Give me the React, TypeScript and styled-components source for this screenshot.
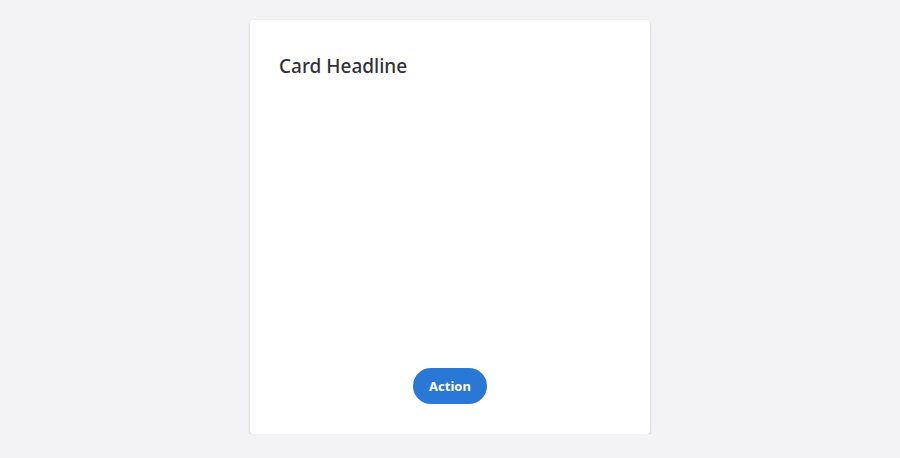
import React from "react";
import styled, { createGlobalStyle } from "styled-components";

const Global = createGlobalStyle`
  html, body { margin: 0; padding: 0; background: #f3f3f5; }
  body { font-family: "Noto Sans", "Open Sans", sans-serif; }
`;

const Page = styled.div`
  display: flex;
  justify-content: center;
  padding-top: 20px;
`;

const Card = styled.div`
  width: 400px;
  height: 414px;
  box-sizing: border-box;
  background: #ffffff;
  border-radius: 3px;
  box-shadow: 0 1px 3px rgba(0, 0, 0, 0.14), 0 1px 2px rgba(0, 0, 0, 0.08);
  padding: 32px 29px 30px;
  display: flex;
  flex-direction: column;
`;

const Headline = styled.h2`
  margin: 0;
  font-size: 19px;
  font-weight: 500;
  color: #32323a;
  line-height: 28px;
`;

const Body = styled.div`
  flex: 1;
`;

const Footer = styled.div`
  display: flex;
  justify-content: center;
`;

const Button = styled.button`
  height: 36px;
  width: 74px;
  border: none;
  border-radius: 18px;
  background: #2a78d6;
  color: #fff;
  font-family: "Noto Sans", "Open Sans", sans-serif;
  font-size: 13px;
  font-weight: 700;
  cursor: pointer;
  padding: 0;
`;

export default function App() {
  return (
    <>
      <Global />
      <Page>
        <Card>
          <Headline>Card Headline</Headline>
          <Body />
          <Footer>
            <Button>Action</Button>
          </Footer>
        </Card>
      </Page>
    </>
  );
}
